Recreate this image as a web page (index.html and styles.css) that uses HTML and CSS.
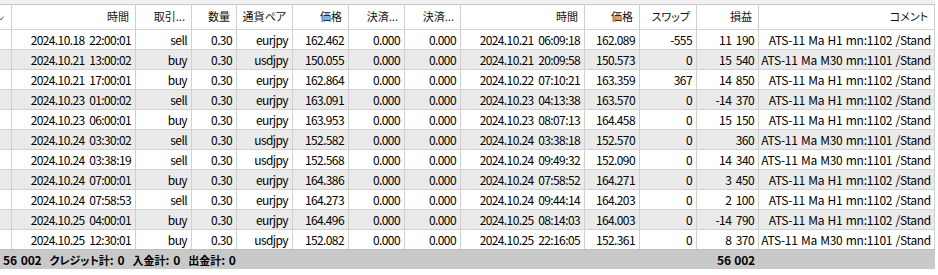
FILE: index.html
```html
<!DOCTYPE html>
<html lang="ja">
<head>
<meta charset="utf-8">
<title>History</title>
<link rel="stylesheet" href="styles.css">
</head>
<body>
<div class="table">
  <div class="top"></div>
  <div class="row head">
    <div class="cell c0"><svg class="chev" width="5" height="8" viewBox="0 0 5 8"><path d="M-2 2.5 L1 6 L3.5 2.5" fill="none" stroke="#666" stroke-width="1"/></svg></div>
    <div class="cell">時間</div>
    <div class="cell">取引...</div>
    <div class="cell">数量</div>
    <div class="cell">通貨ペア</div>
    <div class="cell">価格</div>
    <div class="cell">決済...</div>
    <div class="cell">決済...</div>
    <div class="cell">時間</div>
    <div class="cell">価格</div>
    <div class="cell">スワップ</div>
    <div class="cell">損益</div>
    <div class="cell">コメント</div>
  </div>

  <div class="row">
    <div class="cell"></div><div class="cell">2024.10.18 22:00:01</div><div class="cell">sell</div><div class="cell">0.30</div><div class="cell">eurjpy</div><div class="cell">162.462</div><div class="cell">0.000</div><div class="cell">0.000</div><div class="cell">2024.10.21 06:09:18</div><div class="cell">162.089</div><div class="cell">-555</div><div class="cell">11 190</div><div class="cell cm">ATS-11 Ma H1 mn:1102 /Stand</div>
  </div>
  <div class="row alt">
    <div class="cell"></div><div class="cell">2024.10.21 13:00:02</div><div class="cell">buy</div><div class="cell">0.30</div><div class="cell">usdjpy</div><div class="cell">150.055</div><div class="cell">0.000</div><div class="cell">0.000</div><div class="cell">2024.10.21 20:09:58</div><div class="cell">150.573</div><div class="cell">0</div><div class="cell">15 540</div><div class="cell cm">ATS-11 Ma M30 mn:1101 /Stand</div>
  </div>
  <div class="row">
    <div class="cell"></div><div class="cell">2024.10.21 17:00:01</div><div class="cell">buy</div><div class="cell">0.30</div><div class="cell">eurjpy</div><div class="cell">162.864</div><div class="cell">0.000</div><div class="cell">0.000</div><div class="cell">2024.10.22 07:10:21</div><div class="cell">163.359</div><div class="cell">367</div><div class="cell">14 850</div><div class="cell cm">ATS-11 Ma H1 mn:1102 /Stand</div>
  </div>
  <div class="row alt">
    <div class="cell"></div><div class="cell">2024.10.23 01:00:02</div><div class="cell">sell</div><div class="cell">0.30</div><div class="cell">eurjpy</div><div class="cell">163.091</div><div class="cell">0.000</div><div class="cell">0.000</div><div class="cell">2024.10.23 04:13:38</div><div class="cell">163.570</div><div class="cell">0</div><div class="cell">-14 370</div><div class="cell cm">ATS-11 Ma H1 mn:1102 /Stand</div>
  </div>
  <div class="row">
    <div class="cell"></div><div class="cell">2024.10.23 06:00:01</div><div class="cell">buy</div><div class="cell">0.30</div><div class="cell">eurjpy</div><div class="cell">163.953</div><div class="cell">0.000</div><div class="cell">0.000</div><div class="cell">2024.10.23 08:07:13</div><div class="cell">164.458</div><div class="cell">0</div><div class="cell">15 150</div><div class="cell cm">ATS-11 Ma H1 mn:1102 /Stand</div>
  </div>
  <div class="row alt">
    <div class="cell"></div><div class="cell">2024.10.24 03:30:02</div><div class="cell">sell</div><div class="cell">0.30</div><div class="cell">usdjpy</div><div class="cell">152.582</div><div class="cell">0.000</div><div class="cell">0.000</div><div class="cell">2024.10.24 03:38:18</div><div class="cell">152.570</div><div class="cell">0</div><div class="cell">360</div><div class="cell cm">ATS-11 Ma M30 mn:1101 /Stand</div>
  </div>
  <div class="row">
    <div class="cell"></div><div class="cell">2024.10.24 03:38:19</div><div class="cell">sell</div><div class="cell">0.30</div><div class="cell">usdjpy</div><div class="cell">152.568</div><div class="cell">0.000</div><div class="cell">0.000</div><div class="cell">2024.10.24 09:49:32</div><div class="cell">152.090</div><div class="cell">0</div><div class="cell">14 340</div><div class="cell cm">ATS-11 Ma M30 mn:1101 /Stand</div>
  </div>
  <div class="row alt">
    <div class="cell"></div><div class="cell">2024.10.24 07:00:01</div><div class="cell">buy</div><div class="cell">0.30</div><div class="cell">eurjpy</div><div class="cell">164.386</div><div class="cell">0.000</div><div class="cell">0.000</div><div class="cell">2024.10.24 07:58:52</div><div class="cell">164.271</div><div class="cell">0</div><div class="cell">3 450</div><div class="cell cm">ATS-11 Ma H1 mn:1102 /Stand</div>
  </div>
  <div class="row">
    <div class="cell"></div><div class="cell">2024.10.24 07:58:53</div><div class="cell">sell</div><div class="cell">0.30</div><div class="cell">eurjpy</div><div class="cell">164.273</div><div class="cell">0.000</div><div class="cell">0.000</div><div class="cell">2024.10.24 09:44:14</div><div class="cell">164.203</div><div class="cell">0</div><div class="cell">2 100</div><div class="cell cm">ATS-11 Ma H1 mn:1102 /Stand</div>
  </div>
  <div class="row alt">
    <div class="cell"></div><div class="cell">2024.10.25 04:00:01</div><div class="cell">buy</div><div class="cell">0.30</div><div class="cell">eurjpy</div><div class="cell">164.496</div><div class="cell">0.000</div><div class="cell">0.000</div><div class="cell">2024.10.25 08:14:03</div><div class="cell">164.003</div><div class="cell">0</div><div class="cell">-14 790</div><div class="cell cm">ATS-11 Ma H1 mn:1102 /Stand</div>
  </div>
  <div class="row">
    <div class="cell"></div><div class="cell">2024.10.25 12:30:01</div><div class="cell">buy</div><div class="cell">0.30</div><div class="cell">usdjpy</div><div class="cell">152.082</div><div class="cell">0.000</div><div class="cell">0.000</div><div class="cell">2024.10.25 22:16:05</div><div class="cell">152.361</div><div class="cell">0</div><div class="cell">8 370</div><div class="cell cm">ATS-11 Ma M30 mn:1101 /Stand</div>
  </div>

  <div class="foot">
    <div class="sum-label">56 002&nbsp;&nbsp;<span class="jp">クレジット計</span>: 0&nbsp;&nbsp;<span class="jp">入金計</span>: 0&nbsp;&nbsp;<span class="jp">出金計</span>: 0</div>
    <div class="sum-val">56 002</div>
  </div>
</div>
</body>
</html>
```

FILE: styles.css
```css
html, body {
  margin: 0;
  padding: 0;
  background: #ffffff;
}

body {
  font-family: "Noto Sans CJK JP", "Noto Sans", sans-serif;
  font-size: 12px;
  color: #000000;
}

.table {
  width: 935px;
}

.top {
  height: 4px;
  background: #f0f0f0;
}

.row,
.foot {
  display: grid;
  grid-template-columns: 12px 124px 56px 45px 56px 56px 56px 56px 124px 55px 57px 62px 176px;
  box-sizing: border-box;
}

.row {
  height: 20px;
  border-top: 1px solid #d2d2d2;
}

.row.alt {
  background: #eaeaea;
}

.cell {
  box-sizing: border-box;
  border-right: 1px solid #d0d0d0;
  text-align: right;
  padding-right: 4px;
  line-height: 19px;
  white-space: nowrap;
  overflow: hidden;
  letter-spacing: -0.6px;
  word-spacing: 2.5px;
}

.cell.cm {
  letter-spacing: -0.3px;
  word-spacing: 1px;
  padding-right: 3px;
}

.head {
  height: 25px;
  border-top: 1px solid #c8c8c8;
  background: #ffffff;
}

.head .cell {
  line-height: 23px;
  padding-right: 6px;
  font-size: 11px;
  letter-spacing: 0;
  word-spacing: 0;
  font-feature-settings: "palt";
  color: #111;
}

.head .c0 {
  padding: 0;
}

.chev {
  display: block;
  margin-top: 9px;
}

.foot {
  height: 20px;
  background: #c9c9c9;
  border-top: 1px solid #bdbdbd;
  font-weight: bold;
  line-height: 19px;
}

.sum-label {
  grid-column: 1 / 12;
  padding-left: 3px;
  white-space: nowrap;
  letter-spacing: -0.2px;
  word-spacing: 1.5px;
}

.jp {
  font-size: 11px;
  font-feature-settings: "palt";
  letter-spacing: 0;
}

.sum-val {
  grid-column: 12;
  text-align: right;
  padding-right: 4px;
  letter-spacing: -0.2px;
  word-spacing: 1px;
}
```
